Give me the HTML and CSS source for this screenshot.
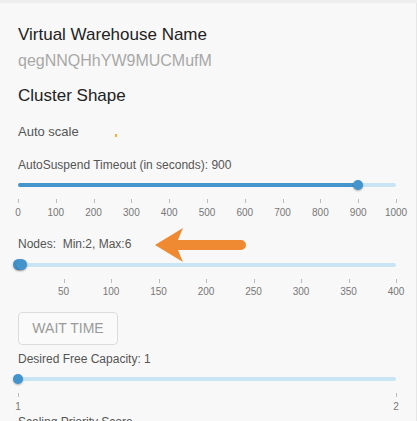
FILE: index.html
```html
<!DOCTYPE html>
<html>
<head>
<meta charset="utf-8">
<link rel="stylesheet" href="styles.css">
</head>
<body>
<div class="panel">
  <div class="title t-first">Virtual Warehouse Name</div>
  <div class="value">qegNNQHhYW9MUCMufM</div>
  <div class="title t-cluster">Cluster Shape</div>
  <div class="auto">Auto scale <span class="dot"></span></div>

  <div class="label l-suspend">AutoSuspend Timeout (in seconds): 900</div>
  <div class="slider s-first">
    <div class="track"><div class="fill" style="width:90%"></div></div>
    <span class="thumb" style="left:90%"></span>
  </div>
  <div class="ticks">
    <span class="tick" style="left:0%"></span><span class="tick" style="left:10%"></span><span class="tick" style="left:20%"></span><span class="tick" style="left:30%"></span><span class="tick" style="left:40%"></span><span class="tick" style="left:50%"></span><span class="tick" style="left:60%"></span><span class="tick" style="left:70%"></span><span class="tick" style="left:80%"></span><span class="tick" style="left:90%"></span><span class="tick" style="left:100%"></span>
  </div>
  <div class="marks">
    <span class="mark" style="left:0%">0</span><span class="mark" style="left:10%">100</span><span class="mark" style="left:20%">200</span><span class="mark" style="left:30%">300</span><span class="mark" style="left:40%">400</span><span class="mark" style="left:50%">500</span><span class="mark" style="left:60%">600</span><span class="mark" style="left:70%">700</span><span class="mark" style="left:80%">800</span><span class="mark" style="left:90%">900</span><span class="mark" style="left:100%">1000</span>
  </div>

  <div class="label l-nodes">Nodes:&nbsp; Min:2, Max:6
    <svg class="arrow" width="94" height="36" viewBox="0 0 94 36">
      <path d="M2 18 L30 1 Q27 8 25 13 L88 13 A5 5 0 0 1 88 23 L25 23 Q27 28 30 35 Z" fill="#f08a32"/>
    </svg>
  </div>
  <div class="slider s-nodes">
    <div class="track"></div>
    <span class="thumb" style="left:0%"></span>
    <span class="thumb" style="left:1%"></span>
  </div>
  <div class="ticks">
    <span class="tick" style="left:12.06%"></span><span class="tick" style="left:24.62%"></span><span class="tick" style="left:37.19%"></span><span class="tick" style="left:49.75%"></span><span class="tick" style="left:62.31%"></span><span class="tick" style="left:74.87%"></span><span class="tick" style="left:87.44%"></span><span class="tick" style="left:100%"></span>
  </div>
  <div class="marks">
    <span class="mark" style="left:12.06%">50</span><span class="mark" style="left:24.62%">100</span><span class="mark" style="left:37.19%">150</span><span class="mark" style="left:49.75%">200</span><span class="mark" style="left:62.31%">250</span><span class="mark" style="left:74.87%">300</span><span class="mark" style="left:87.44%">350</span><span class="mark" style="left:100%">400</span>
  </div>

  <button class="btn">WAIT TIME</button>

  <div class="label l-desired">Desired Free Capacity: 1</div>
  <div class="slider s-desired">
    <div class="track"></div>
    <span class="thumb" style="left:0%"></span>
  </div>
  <div class="ticks">
    <span class="tick" style="left:0%"></span><span class="tick" style="left:100%"></span>
  </div>
  <div class="marks">
    <span class="mark" style="left:0%">1</span><span class="mark" style="left:100%">2</span>
  </div>
  <div class="label l-bottom">Scaling Priority Score</div>
</div>
</body>
</html>
```

FILE: styles.css
```css
html, body {
  margin: 0;
  padding: 0;
  background: #eeeeee;
  font-family: "Liberation Sans", Arial, sans-serif;
}
body {
  overflow: hidden;
  height: 421px;
}
.panel {
  margin-top: 3px;
  background: #f8f8f8;
  border-right: 1px solid #e6e6e6;
  padding: 22px 20px 0 18px;
  height: 396px;
  overflow: hidden;
}
.title {
  font-size: 17px;
  line-height: 20px;
  color: #222;
}
.value {
  font-size: 16px;
  line-height: 20px;
  color: #a8a8a8;
  margin-top: 5.5px;
}
.t-cluster {
  margin-top: 15.5px;
}
.auto {
  margin-top: 18.4px;
  font-size: 13px;
  line-height: 16px;
  color: #555;
  display: flex;
  align-items: center;
}
.dot {
  display: inline-block;
  width: 2px;
  height: 3px;
  background: #f3b530;
  margin-left: 36px;
  margin-top: 7px;
}
.label {
  font-size: 12px;
  line-height: 14px;
  color: #555;
}
.l-suspend { margin-top: 17.6px; }
.l-nodes { margin-top: 18.3px; position: relative; }
.l-desired { margin-top: 7px; }
.l-bottom { margin-top: 2px; }
.arrow {
  position: absolute;
  left: 135px;
  top: -10px;
}
.slider {
  position: relative;
  padding: 4px 0;
  margin-top: 7.5px;
}
.track {
  height: 4px;
  border-radius: 2px;
  background: #c9e4f3;
  overflow: hidden;
}
.fill {
  height: 100%;
  background: #4595cd;
}
.thumb {
  position: absolute;
  top: 1px;
  width: 10px;
  height: 10px;
  margin-left: -5px;
  border-radius: 50%;
  background: #4394cc;
  box-shadow: 0 1px 2px rgba(0,0,0,0.3);
}
.s-nodes .thumb {
  width: 11px;
  height: 11px;
  margin-left: -5.5px;
  top: 0.5px;
}
.ticks {
  position: relative;
  height: 4px;
  margin-top: 8px;
}
.tick {
  position: absolute;
  top: 0;
  width: 1px;
  height: 4px;
  background: #bbbbbb;
}
.marks {
  position: relative;
  height: 12px;
  margin-top: 3.5px;
  font-size: 10px;
  line-height: 12px;
  color: #777;
}
.mark {
  position: absolute;
  top: 0;
  transform: translateX(-50%);
  white-space: nowrap;
}
.btn {
  display: block;
  margin-top: 13.5px;
  width: 100px;
  height: 33px;
  box-sizing: border-box;
  border: 1px solid #dcdcdc;
  border-radius: 4px;
  background: #fafafa;
  color: #9a9a9a;
  font-family: "Liberation Sans", Arial, sans-serif;
  font-size: 14px;
  padding: 0;
  text-align: center;
}
```
